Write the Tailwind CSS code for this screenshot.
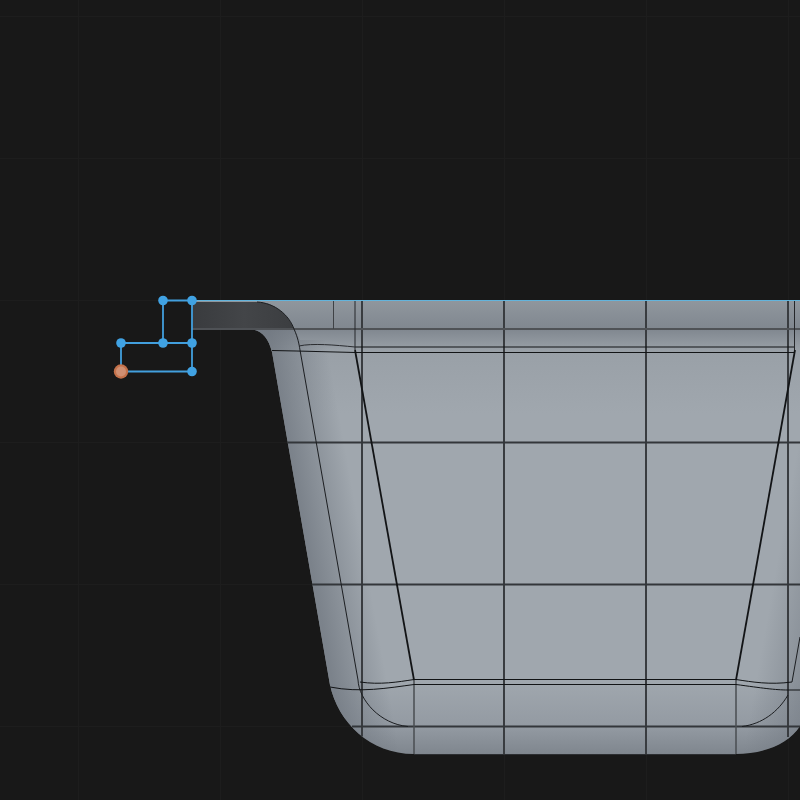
<!DOCTYPE html>
<html lang="en">
<head>
  <meta charset="UTF-8" />
  <title>Curve editor viewport</title>
  <script src="https://cdn.jsdelivr.net/npm/@tailwindcss/browser@4"></script>
</head>
<body class="bg-[#181818] overflow-hidden">
  <main class="w-[800px] h-[800px] bg-[#181818]">
    <svg class="block w-[800px] h-[800px]" viewBox="0 0 800 800" fill="none">
      <defs>
        <linearGradient id="bodyFill" gradientUnits="userSpaceOnUse" x1="0" y1="300" x2="0" y2="754">
          <stop offset="0" stop-color="#90979e" />
          <stop offset="0.064" stop-color="#80878f" />
          <stop offset="0.11" stop-color="#99a0a7" />
          <stop offset="0.25" stop-color="#a0a7ae" />
          <stop offset="0.84" stop-color="#a0a7ae" />
          <stop offset="0.94" stop-color="#939aa2" />
          <stop offset="1" stop-color="#7f868e" />
        </linearGradient>
        <linearGradient id="leftShade" gradientUnits="userSpaceOnUse" x1="282" y1="400" x2="335" y2="390.500">
          <stop offset="0" stop-color="#6f767f" stop-opacity="0.75" />
          <stop offset="1" stop-color="#6f767f" stop-opacity="0" />
        </linearGradient>
        <linearGradient id="rightShade" gradientUnits="userSpaceOnUse" x1="825" y1="600" x2="772" y2="590.500">
          <stop offset="0" stop-color="#6f767f" stop-opacity="0.6" />
          <stop offset="1" stop-color="#6f767f" stop-opacity="0" />
        </linearGradient>
        <linearGradient id="bandFill" gradientUnits="userSpaceOnUse" x1="192" y1="0" x2="296" y2="0">
          <stop offset="0" stop-color="#393b3e" />
          <stop offset="0.5" stop-color="#434548" />
          <stop offset="1" stop-color="#3b3d40" />
        </linearGradient>
      </defs>

      <!-- background grid -->
      <g stroke="#1d1d1d" stroke-width="1">
        <path d="M78.5 0V800M220.5 0V800M362.5 0V800M504.5 0V800M646.5 0V800M788.5 0V800" />
        <path d="M0 16.5H800M0 158.5H800M0 300.5H800M0 442.5H800M0 584.5H800M0 726.5H800" />
      </g>

      <!-- cup section -->
      <path fill="url(#bodyFill)" d="M256 300H800V726C788 745 762 754 736 754H414C370 754 338 722 330 685L272 352C268 336 260 329 248 329H192V300Z" />
      <path fill="url(#leftShade)" d="M300 340H480V754H414C370 754 338 722 330 685L272 352C268 336 260 329 248 329H295Z" />
      <path fill="url(#rightShade)" d="M670 340H800V726C788 745 762 754 736 754H670Z" />
      <path fill="url(#bandFill)" d="M192 302H256C274 302 288 314 294 329H192Z" />

      <!-- mesh grid on the surface -->
      <g stroke="#393c40" stroke-width="2">
        <path d="M362 300V736.500M504 300V754M646 300V754M788 300V737" />
        <path d="M287 442.500H800M312 584.500H800M352 726.500H800" stroke="#33363a" />
        <path d="M192 329H800" stroke="#4f5256" />
      </g>
      <g stroke="#4a4d51" stroke-width="1.500">
        <path d="M414 680V754M736 680V754" />
        <path d="M333.500 300V329" stroke="#3f4246" stroke-width="1" />
      </g>

      <!-- edge loops -->
      <g stroke="#121416" stroke-width="1.200">
        <path d="M355 347H795M355 352.500H795" />
        <path d="M355 300V350M794.500 300V350" stroke="#25272a" stroke-width="1" />
        <path d="M414 679.500H736M414 684.500H736" />
        <path d="M257 302C275 303 289 315 294 329C298 338 299 344 300 350L358 680C359 700 380 724 408 726.500" stroke="#1c1e21" stroke-width="1" />
        <path d="M272 350.500C300 351 330 352 355 352.500" stroke-width="1.100" />
        <path d="M299 346C312 343 335 345 355 347" stroke="#2a2c30" stroke-width="1" />
        <path d="M360 682C380 685 398 682 414 679.500" stroke-width="1" />
        <path d="M330 687C360 693 388 688 414 684.500" stroke-width="1" />
        <path d="M736 679.500C752 682 770 685 792 682" stroke-width="1" />
        <path d="M736 684.500C762 688 775 690 788 690H800" stroke-width="1" />
        <path d="M800 637L792 682" stroke="#1c1e21" stroke-width="1" />
        <path d="M788 695C778 712 762 724 742 726.500" stroke="#1c1e21" stroke-width="1" />
        <path d="M355 350L414 680" stroke-width="1.800" />
        <path d="M795 350L736 680" stroke-width="1.800" />
      </g>

      <!-- silhouette shadow -->
      <path d="M414 754.500H736" stroke="#2c2e31" stroke-width="1.200" />

      <!-- control polygon -->
      <path d="M192 300.500H800" stroke="#63b4dc" stroke-width="1.200" />
      <g stroke="#429fdd" stroke-width="1.800">
        <path d="M163 300.500H192V371.500H121V343H192" />
        <path d="M163 300.500V343" />
      </g>
      <g fill="#40a2e3">
        <circle cx="163" cy="300.500" r="4.800" />
        <circle cx="192" cy="300.500" r="4.800" />
        <circle cx="121" cy="343" r="4.800" />
        <circle cx="163" cy="343" r="4.800" />
        <circle cx="192" cy="343" r="4.800" />
        <circle cx="192" cy="371.500" r="4.800" />
      </g>
      <circle cx="121" cy="371.500" r="7.200" fill="#c4714a" />
      <circle cx="121" cy="371.500" r="5" fill="#cf8f72" />
    </svg>
  </main>
</body>
</html>
